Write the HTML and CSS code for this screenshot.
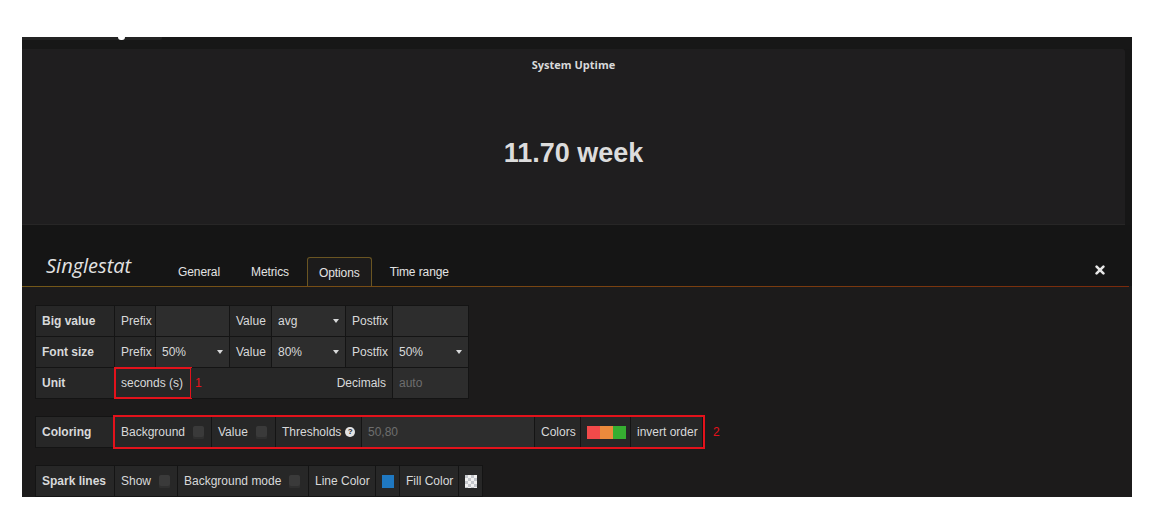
FILE: index.html
```html
<!DOCTYPE html>
<html>
<head>
<meta charset="utf-8">
<link rel="stylesheet" href="styles.css">
</head>
<body>
<div class="frame">
  <div class="topstrip"><div class="stub"><span class="notch"></span></div></div>
  <div class="panel">
    <div class="panel-title">System Uptime</div>
    <div class="panel-value">11.70 week</div>
  </div>
  <div class="editor">
    <div class="editor-header">
      <div class="editor-title">Singlestat</div>
      <ul class="tabs">
        <li class="tab">General</li>
        <li class="tab">Metrics</li>
        <li class="tab active">Options</li>
        <li class="tab">Time range</li>
      </ul>
      <span class="close"><svg width="10" height="10" viewBox="0 0 10 10"><path d="M1.6 1.6 L8.4 8.4 M8.4 1.6 L1.6 8.4" stroke="#e6e6e6" stroke-width="2.6" stroke-linecap="round"/></svg></span>
    </div>
    <div class="rule"></div>
    <div class="editor-body">
      <div class="stack">
        <div class="row">
          <div class="cell head w79">Big value</div>
          <div class="cell w41">Prefix</div>
          <div class="cell inp w74"></div>
          <div class="cell w42">Value</div>
          <div class="cell inp sel w74">avg<i class="caret"></i></div>
          <div class="cell w47">Postfix</div>
          <div class="cell inp w76"></div>
        </div>
        <div class="row">
          <div class="cell head w79">Font size</div>
          <div class="cell w41">Prefix</div>
          <div class="cell inp sel w74">50%<i class="caret"></i></div>
          <div class="cell w42">Value</div>
          <div class="cell inp sel w74">80%<i class="caret"></i></div>
          <div class="cell w47">Postfix</div>
          <div class="cell inp sel w76">50%<i class="caret"></i></div>
        </div>
        <div class="row last">
          <div class="cell head w79">Unit</div>
          <div class="cell mark w76">seconds (s)</div>
          <div class="cell grow"><span class="num">1</span><span>Decimals</span></div>
          <div class="cell inp w76"><span class="ph">auto</span></div>
        </div>
      </div>

      <div class="line gap17">
        <div class="row single">
          <div class="cell head w79">Coloring</div>
          <div class="group">
            <div class="cell w97">Background<i class="cb"></i></div>
            <div class="cell w64">Value<i class="cb"></i></div>
            <div class="cell w86">Thresholds<i class="help">?</i></div>
            <div class="cell inp w173"><span class="ph">50,80</span></div>
            <div class="cell w46">Colors</div>
            <div class="cell w50"><i class="sw red"></i><i class="sw orange"></i><i class="sw green"></i></div>
            <div class="cell w72">invert order</div>
          </div>
        </div>
        <span class="num num2">2</span>
      </div>

      <div class="line gap17">
        <div class="row single">
          <div class="cell head w79">Spark lines</div>
          <div class="cell w63">Show<i class="cb"></i></div>
          <div class="cell w131">Background mode<i class="cb"></i></div>
          <div class="cell w67">Line Color</div>
          <div class="cell w24"><i class="sw blue"></i></div>
          <div class="cell w59">Fill Color</div>
          <div class="cell w24"><i class="sw checker"></i></div>
        </div>
      </div>
    </div>
  </div>
</div>
</body>
</html>
```

FILE: styles.css
```css
html, body {
  margin: 0;
  background: #ffffff;
  font-family: "Liberation Sans", Arial, sans-serif;
}

.frame {
  margin: 37px 0 0 22px;
  width: 1110px;
  height: 460px;
  background: #161616;
  overflow: hidden;
}

.topstrip {
  height: 12px;
  background: #171717;
}

.stub {
  width: 140px;
  height: 3px;
  background: #232323;
  border-bottom-right-radius: 2px;
  position: relative;
}

.notch {
  position: absolute;
  left: 96px;
  top: 0;
  width: 7px;
  height: 3px;
  background: #ffffff;
  border-radius: 0 0 4px 4px;
}

.panel {
  width: 1103px;
  height: 175px;
  background: #1f1e1f;
  border-bottom: 1px solid #272626;
  border-top-right-radius: 3px;
  display: flex;
  flex-direction: column;
  align-items: center;
  color: #d8d9da;
}

.panel-title {
  margin-top: 9px;
  font: 700 11px/14px "Open Sans", sans-serif;
}

.panel-value {
  margin-top: 65px;
  font: bold 27px/32px "Liberation Sans", Arial, sans-serif;
  color: #dcdcdc;
}

.editor {
  background: #1c1b1b;
  height: 272px;
}

.editor-header {
  height: 61px;
  background: #151515;
  display: flex;
  align-items: flex-end;
}

.rule {
  height: 1px;
  margin-right: 3px;
  background: linear-gradient(to right, #735819, #7a4010 60%, #7a2a0c);
}

.editor-title {
  flex: none;
  width: 119px;
  padding-left: 24px;
  margin-bottom: 6px;
  font: italic 20px/28px "Open Sans", sans-serif;
  color: #e2e2e2;
}

.tabs {
  display: flex;
  list-style: none;
  margin: 0;
  padding: 0;
}

.tab {
  height: 28px;
  line-height: 28px;
  padding: 0 12px;
  border: 1px solid transparent;
  border-bottom: 0;
  margin-right: 5px;
  font-size: 12px;
  letter-spacing: -0.1px;
  color: #e3e3e3;
}

.tab.active {
  padding: 0 11px;
  border-color: #6a5522;
  background: #1c1b1b;
  border-radius: 3px 3px 0 0;
  line-height: 30px;
}

.close {
  margin-left: auto;
  margin-right: 27px;
  align-self: flex-start;
  margin-top: 40px;
  height: 10px;
  display: flex;
}

.editor-body {
  padding: 18px 0 0 13px;
}

.stack {
  width: 434px;
}

.row {
  display: flex;
  border-left: 1px solid #141414;
  border-top: 1px solid #141414;
}

.row.last,
.row.single {
  border-bottom: 1px solid #141414;
}

.line {
  display: flex;
  align-items: center;
}

.gap17 {
  margin-top: 17px;
}

.group {
  display: flex;
  outline: 2px solid #e3121b;
}

.cell {
  box-sizing: border-box;
  height: 30px;
  padding: 0 6px;
  border-right: 1px solid #141414;
  background: #272727;
  color: #d8d9da;
  font-size: 12px;
  white-space: nowrap;
  display: flex;
  align-items: center;
  flex: none;
}

.inp {
  background: #2d2d2d;
}

.head {
  font-weight: bold;
}

.sel {
  justify-content: space-between;
}

.grow {
  flex: 1;
  justify-content: space-between;
  padding-left: 4px;
}

.mark {
  outline: 2px solid #e3121b;
  outline-offset: -1px;
}

.caret {
  width: 0;
  height: 0;
  border-left: 3px solid transparent;
  border-right: 3px solid transparent;
  border-top: 4px solid #d8d9da;
}

.ph {
  color: #6e6e6e;
}

.num {
  color: #e3121b;
  font-size: 12px;
}

.num2 {
  margin-left: 10px;
}

.cb {
  width: 11px;
  height: 13px;
  background: #3a3a3a;
  border-radius: 2px;
  margin-left: 8px;
  box-shadow: inset 0 -2px 0 #2f2f2f;
}

.help {
  width: 10px;
  height: 10px;
  border-radius: 50%;
  background: #e2e2e2;
  color: #242424;
  font: bold 8px/10px "Liberation Sans", Arial, sans-serif;
  text-align: center;
  font-style: normal;
  margin-left: 4px;
}

.sw {
  width: 13px;
  height: 13px;
  flex: none;
}

.red { background: #f24a4a; }
.orange { background: #ec8a3c; }
.green { background: #36ae31; }
.blue { width: 12px; background: #1f78c1; }

.checker {
  width: 12px;
  background-color: #d6d8dc;
  background-image: conic-gradient(#f0f0f0 25%, #c4c7cc 0 50%, #f0f0f0 0 75%, #c4c7cc 0);
  background-size: 6px 6px;
}

.w24 { width: 24px; }
.w41 { width: 41px; }
.w42 { width: 42px; }
.w46 { width: 46px; }
.w47 { width: 47px; }
.w50 { width: 50px; }
.w59 { width: 59px; }
.w63 { width: 63px; }
.w64 { width: 64px; }
.w67 { width: 67px; }
.w72 { width: 72px; }
.w74 { width: 74px; }
.w76 { width: 76px; }
.w79 { width: 79px; }
.w86 { width: 86px; }
.w97 { width: 97px; }
.w131 { width: 131px; }
.w173 { width: 173px; }
```
